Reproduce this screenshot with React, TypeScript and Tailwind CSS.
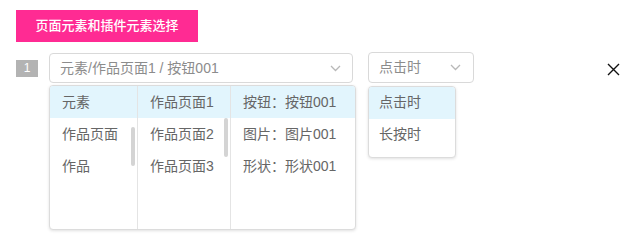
import { useState } from "react";

const FONT = { fontFamily: '"Liberation Sans", "Noto Sans CJK SC", sans-serif' };

const COL1 = ["元素", "作品页面", "作品"];
const COL2 = ["作品页面1", "作品页面2", "作品页面3"];
const COL3 = ["按钮：按钮001", "图片：图片001", "形状：形状001"];
const TRIGGERS = ["点击时", "长按时"];

function Chevron() {
  return (
    <svg width="11" height="7" viewBox="0 0 11 7" fill="none" className="shrink-0">
      <path d="M1 1l4.5 4.5L10 1" stroke="#b8b8b8" strokeWidth="1.3" />
    </svg>
  );
}

function Column({
  items,
  active,
  width,
  scroll,
  last,
}: {
  items: string[];
  active: number;
  width?: string;
  scroll?: string;
  last?: boolean;
}) {
  return (
    <div className={`relative h-full ${width ?? "flex-1"} ${last ? "" : "border-r border-[#e4e4e4]"}`}>
      <ul>
        {items.map((t, i) => (
          <li
            key={t}
            className={`flex h-[32px] items-center pl-[12px] text-[14px] text-[#666] ${
              i === active ? "bg-[#e2f5fd]" : ""
            }`}
          >
            {t}
          </li>
        ))}
      </ul>
      {scroll && <span className={`absolute right-[2px] w-[4px] rounded-full bg-[#d4d4d4] ${scroll}`} />}
    </div>
  );
}

export default function App() {
  const [trigger, setTrigger] = useState(0);

  return (
    <div className="h-[242px] w-[632px] bg-white px-4 pt-[10px]" style={FONT}>
      <button
        type="button"
        className="flex h-[32px] w-[182px] items-center justify-center bg-[#ff2b93] text-[13px] font-medium text-white"
      >
        页面元素和插件元素选择
      </button>

      <div className="mt-[10px] flex h-[32px] items-center">
        <span className="flex h-[17px] w-[22px] items-center justify-center bg-[#b3b3b3] text-[12px] text-white">
          1
        </span>

        <div className="relative ml-[11px]">
          <div className="flex h-[30px] w-[304px] items-center justify-between rounded-[4px] border border-[#d9d9d9] pl-[10px] pr-[11px] text-[14px] text-[#8c8c8c]">
            <span>元素/作品页面1 / 按钮001</span>
            <Chevron />
          </div>
          <div className="absolute left-0 top-[32px] flex h-[145px] w-[307px] overflow-hidden rounded-[4px] border border-[#dcdcdc] bg-white shadow-[0_1px_3px_rgba(0,0,0,0.12)]">
            <Column items={COL1} active={0} width="w-[88px]" scroll="top-[41px] h-[39px]" />
            <Column items={COL2} active={0} width="w-[93px]" scroll="top-[32px] h-[39px]" />
            <Column items={COL3} active={0} last />
          </div>
        </div>

        <div className="relative ml-[15px]">
          <div className="flex h-[31px] w-[106px] -translate-y-[1px] items-center justify-between rounded-[4px] border border-[#d9d9d9] pl-[10px] pr-[12px] text-[14px] text-[#8c8c8c]">
            <span>{TRIGGERS[trigger]}</span>
            <Chevron />
          </div>
          <ul className="absolute left-0 top-[33px] w-[88px] overflow-hidden rounded-[4px] border border-[#dcdcdc] bg-white shadow-[0_1px_3px_rgba(0,0,0,0.12)]">
            {TRIGGERS.map((t, i) => (
              <li
                key={t}
                onClick={() => setTrigger(i)}
                className={`flex h-[32px] items-center pl-[10px] text-[14px] text-[#666] ${
                  i === trigger ? "bg-[#e2f5fd]" : ""
                }`}
              >
                {t}
              </li>
            ))}
            <li className="h-[6px]" />
          </ul>
        </div>

        <button type="button" className="ml-auto mr-[-3px] mt-[3px] flex h-[16px] w-[16px] items-center justify-center">
          <svg width="13" height="13" viewBox="0 0 13 13" className="translate-x-[2px]">
            <path d="M1 1l11 11M12 1L1 12" stroke="#111" strokeWidth="1.4" />
          </svg>
        </button>
      </div>
    </div>
  );
}
